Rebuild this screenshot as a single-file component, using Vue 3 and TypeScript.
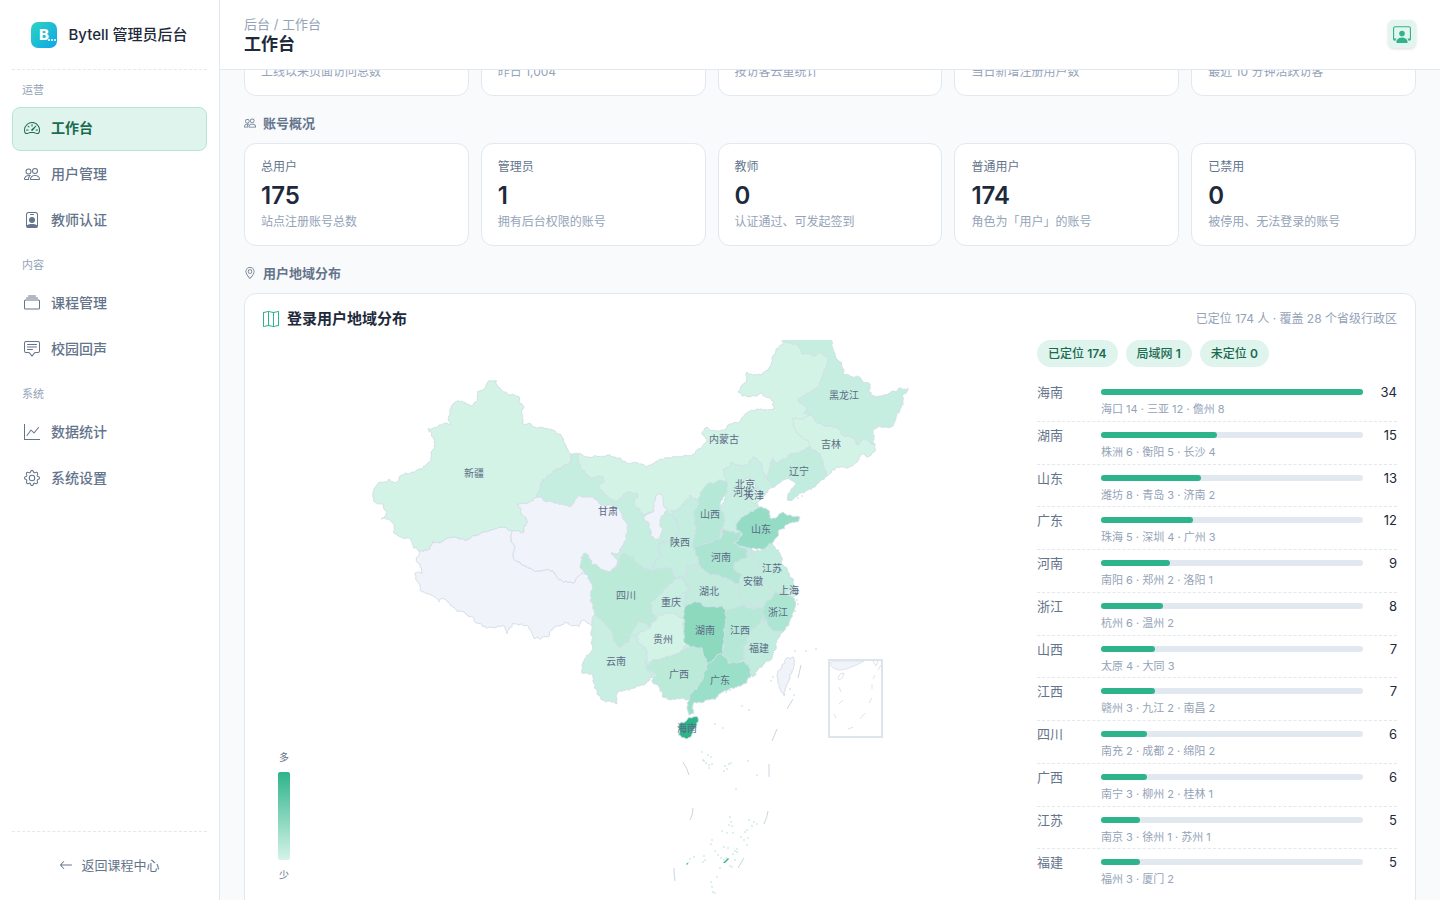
<script setup lang="ts">
interface NavItem { label: string; icon: string }
interface NavGroup { title: string; items: NavItem[] }
interface Stat { label: string; value: string; note: string }
interface Region { name: string; count: number; cities: string }
type Point = [number, number]
interface Province { fill: string; points: Point[] }

const icons: Record<string, string[]> = {
  speedometer: [
    'M8 4a.5.5 0 0 1 .5.5V6a.5.5 0 0 1-1 0V4.5A.5.5 0 0 1 8 4zM3.732 5.732a.5.5 0 0 1 .707 0l.915.914a.5.5 0 1 1-.708.708l-.914-.915a.5.5 0 0 1 0-.707zM2 10a.5.5 0 0 1 .5-.5h1.586a.5.5 0 0 1 0 1H2.5A.5.5 0 0 1 2 10zm9.5 0a.5.5 0 0 1 .5-.5h1.5a.5.5 0 0 1 0 1H12a.5.5 0 0 1-.5-.5zm.754-4.246a.389.389 0 0 0-.527-.02L7.547 9.31a.91.91 0 1 0 1.302 1.258l3.434-4.297a.389.389 0 0 0-.029-.518z',
    'M0 10a8 8 0 1 1 15.547 2.661c-.442 1.253-1.845 1.602-2.932 1.25C11.309 13.488 9.475 13 8 13c-1.474 0-3.31.488-4.615.911-1.087.352-2.49.003-2.932-1.25A7.988 7.988 0 0 1 0 10zm8-7a7 7 0 0 0-6.603 9.329c.203.575.923.876 1.68.63C4.397 12.533 6.358 12 8 12s3.604.532 4.923.96c.757.245 1.477-.056 1.68-.631A7 7 0 0 0 8 3z',
  ],
  people: [
    'M15 14s1 0 1-1-1-4-5-4-5 3-5 4 1 1 1 1h8Zm-7.978-1A.261.261 0 0 1 7 12.996c.001-.264.167-1.03.76-1.72C8.312 10.629 9.282 10 11 10c1.717 0 2.687.63 3.24 1.276.593.69.758 1.457.76 1.72l-.008.002a.274.274 0 0 1-.014.002H7.022ZM11 7a2 2 0 1 0 0-4 2 2 0 0 0 0 4Zm3-2a3 3 0 1 1-6 0 3 3 0 0 1 6 0ZM6.936 9.28a5.88 5.88 0 0 0-1.23-.247A7.35 7.35 0 0 0 5 9c-4 0-5 3-5 4 0 .667.333 1 1 1h4.216A2.238 2.238 0 0 1 5 13c0-1.01.377-2.042 1.09-2.904.243-.294.526-.569.846-.816ZM4.92 10A5.493 5.493 0 0 0 4 13H1c0-.26.164-1.03.76-1.724.545-.636 1.492-1.256 3.16-1.275ZM1.5 5.5a3 3 0 1 1 6 0 3 3 0 0 1-6 0Zm3-2a2 2 0 1 0 0 4 2 2 0 0 0 0-4Z',
  ],
  badge: [
    'M6.5 2a.5.5 0 0 0 0 1h3a.5.5 0 0 0 0-1h-3zM11 8a3 3 0 1 1-6 0 3 3 0 0 1 6 0z',
    'M4.5 0A2.5 2.5 0 0 0 2 2.5V14a2 2 0 0 0 2 2h8a2 2 0 0 0 2-2V2.5A2.5 2.5 0 0 0 11.5 0h-7zM3 2.5A1.5 1.5 0 0 1 4.5 1h7A1.5 1.5 0 0 1 13 2.5v10.795a4.2 4.2 0 0 0-.776-.492C11.392 12.387 10.063 12 8 12s-3.392.387-4.224.803a4.2 4.2 0 0 0-.776.492V2.5z',
  ],
  collection: [
    'M2.5 3.5a.5.5 0 0 1 0-1h11a.5.5 0 0 1 0 1h-11zm2-2a.5.5 0 0 1 0-1h7a.5.5 0 0 1 0 1h-7zM0 13a1.5 1.5 0 0 0 1.5 1.5h13A1.5 1.5 0 0 0 16 13V6a1.5 1.5 0 0 0-1.5-1.5h-13A1.5 1.5 0 0 0 0 6v7zm1.5.5A.5.5 0 0 1 1 13V6a.5.5 0 0 1 .5-.5h13a.5.5 0 0 1 .5.5v7a.5.5 0 0 1-.5.5h-13z',
  ],
  chat: [
    'M14 1a1 1 0 0 1 1 1v8a1 1 0 0 1-1 1h-2.5a2 2 0 0 0-1.6.8L8 14.333 6.1 11.8a2 2 0 0 0-1.6-.8H2a1 1 0 0 1-1-1V2a1 1 0 0 1 1-1h12zM2 0a2 2 0 0 0-2 2v8a2 2 0 0 0 2 2h2.5a1 1 0 0 1 .8.4l1.9 2.533a1 1 0 0 0 1.6 0l1.9-2.533a1 1 0 0 1 .8-.4H14a2 2 0 0 0 2-2V2a2 2 0 0 0-2-2H2z',
    'M3 3.5a.5.5 0 0 1 .5-.5h9a.5.5 0 0 1 0 1h-9a.5.5 0 0 1-.5-.5zM3 6a.5.5 0 0 1 .5-.5h9a.5.5 0 0 1 0 1h-9A.5.5 0 0 1 3 6zm0 2.5a.5.5 0 0 1 .5-.5h5a.5.5 0 0 1 0 1h-5a.5.5 0 0 1-.5-.5z',
  ],
  graph: [
    'M0 0h1v15h15v1H0V0Zm14.817 3.113a.5.5 0 0 1 .07.704l-4.5 5.5a.5.5 0 0 1-.74.037L7.06 6.767l-3.656 5.027a.5.5 0 0 1-.808-.588l4-5.5a.5.5 0 0 1 .758-.06l2.609 2.61 4.15-5.073a.5.5 0 0 1 .704-.07Z',
  ],
  gear: [
    'M8 4.754a3.246 3.246 0 1 0 0 6.492 3.246 3.246 0 0 0 0-6.492zM5.754 8a2.246 2.246 0 1 1 4.492 0 2.246 2.246 0 0 1-4.492 0z',
    'M9.796 1.343c-.527-1.79-3.065-1.79-3.592 0l-.094.319a.873.873 0 0 1-1.255.52l-.292-.16c-1.64-.892-3.433.902-2.54 2.541l.159.292a.873.873 0 0 1-.52 1.255l-.319.094c-1.79.527-1.79 3.065 0 3.592l.319.094a.873.873 0 0 1 .52 1.255l-.16.292c-.892 1.64.901 3.434 2.541 2.54l.292-.159a.873.873 0 0 1 1.255.52l.094.319c.527 1.79 3.065 1.79 3.592 0l.094-.319a.873.873 0 0 1 1.255-.52l.292.16c1.64.893 3.434-.902 2.54-2.541l-.159-.292a.873.873 0 0 1 .52-1.255l.319-.094c1.79-.527 1.79-3.065 0-3.592l-.319-.094a.873.873 0 0 1-.52-1.255l.16-.292c.893-1.64-.902-3.433-2.541-2.54l-.292.159a.873.873 0 0 1-1.255-.52l-.094-.319zm-2.633.283c.246-.835 1.428-.835 1.674 0l.094.319a1.873 1.873 0 0 0 2.693 1.115l.291-.16c.764-.415 1.6.42 1.184 1.185l-.159.292a1.873 1.873 0 0 0 1.116 2.692l.318.094c.835.246.835 1.428 0 1.674l-.319.094a1.873 1.873 0 0 0-1.115 2.693l.16.291c.415.764-.42 1.6-1.185 1.184l-.291-.159a1.873 1.873 0 0 0-2.693 1.116l-.094.318c-.246.835-1.428.835-1.674 0l-.094-.319a1.873 1.873 0 0 0-2.692-1.115l-.292.16c-.764.415-1.6-.42-1.184-1.185l.159-.291A1.873 1.873 0 0 0 1.945 8.93l-.319-.094c-.835-.246-.835-1.428 0-1.674l.319-.094A1.873 1.873 0 0 0 3.06 4.377l-.16-.292c-.415-.764.42-1.6 1.185-1.184l.292.159a1.873 1.873 0 0 0 2.692-1.115l.094-.319z',
  ],
  pin: [
    'M12.166 8.94c-.524 1.062-1.234 2.12-1.96 3.07A31.493 31.493 0 0 1 8 14.58a31.481 31.481 0 0 1-2.206-2.57c-.726-.95-1.436-2.008-1.96-3.07C3.304 7.867 3 6.862 3 6a5 5 0 0 1 10 0c0 .862-.305 1.867-.834 2.94zM8 16s6-5.686 6-10A6 6 0 0 0 2 6c0 4.314 6 10 6 10z',
    'M8 8a2 2 0 1 1 0-4 2 2 0 0 1 0 4zm0 1a3 3 0 1 0 0-6 3 3 0 0 0 0 6z',
  ],
  map: [
    'M15.817.113A.5.5 0 0 1 16 .5v14a.5.5 0 0 1-.402.49l-5 1a.502.502 0 0 1-.196 0L5.5 15.01l-4.902.98A.5.5 0 0 1 0 15.5v-14a.5.5 0 0 1 .402-.49l5-1a.5.5 0 0 1 .196 0L10.5.99l4.902-.98a.5.5 0 0 1 .415.103zM10 1.91l-4-.8v12.98l4 .8V1.91zm1 12.98 4-.8V1.11l-4 .8v12.98zm-6-.8V1.11l-4 .8v12.98l4-.8z',
  ],
  arrow: [
    'M15 8a.5.5 0 0 0-.5-.5H2.707l3.147-3.146a.5.5 0 1 0-.708-.708l-4 4a.5.5 0 0 0 0 .708l4 4a.5.5 0 0 0 .708-.708L2.707 8.5H14.5A.5.5 0 0 0 15 8z',
  ],
  workspace: [
    'M4 16s-1 0-1-1 1-4 5-4 5 3 5 4-1 1-1 1H4Zm4-5.95a2.5 2.5 0 1 0 0-5 2.5 2.5 0 0 0 0 5Z',
    'M2 1a2 2 0 0 0-2 2v9.5A1.5 1.5 0 0 0 1.5 14h.653a5.373 5.373 0 0 1 1.066-2H1V3a1 1 0 0 1 1-1h12a1 1 0 0 1 1 1v9h-2.219c.554.654.89 1.373 1.066 2h.653a1.5 1.5 0 0 0 1.5-1.5V3a2 2 0 0 0-2-2H2Z',
  ],
}

const groups: NavGroup[] = [
  { title: '运营', items: [
    { label: '工作台', icon: 'speedometer' },
    { label: '用户管理', icon: 'people' },
    { label: '教师认证', icon: 'badge' },
  ] },
  { title: '内容', items: [
    { label: '课程管理', icon: 'collection' },
    { label: '校园回声', icon: 'chat' },
  ] },
  { title: '系统', items: [
    { label: '数据统计', icon: 'graph' },
    { label: '系统设置', icon: 'gear' },
  ] },
]

const trafficNotes = ['上线以来页面访问总数', '昨日 1,004', '按访客去重统计', '当日新增注册用户数', '最近 10 分钟活跃访客']

const stats: Stat[] = [
  { label: '总用户', value: '175', note: '站点注册账号总数' },
  { label: '管理员', value: '1', note: '拥有后台权限的账号' },
  { label: '教师', value: '0', note: '认证通过、可发起签到' },
  { label: '普通用户', value: '174', note: '角色为「用户」的账号' },
  { label: '已禁用', value: '0', note: '被停用、无法登录的账号' },
]

const chips = [
  { label: '已定位', value: 174 },
  { label: '局域网', value: 1 },
  { label: '未定位', value: 0 },
]

const regions: Region[] = [
  { name: '海南', count: 34, cities: '海口 14 · 三亚 12 · 儋州 8' },
  { name: '湖南', count: 15, cities: '株洲 6 · 衡阳 5 · 长沙 4' },
  { name: '山东', count: 13, cities: '潍坊 8 · 青岛 3 · 济南 2' },
  { name: '广东', count: 12, cities: '珠海 5 · 深圳 4 · 广州 3' },
  { name: '河南', count: 9, cities: '南阳 6 · 郑州 2 · 洛阳 1' },
  { name: '浙江', count: 8, cities: '杭州 6 · 温州 2' },
  { name: '山西', count: 7, cities: '太原 4 · 大同 3' },
  { name: '江西', count: 7, cities: '赣州 3 · 九江 2 · 南昌 2' },
  { name: '四川', count: 6, cities: '南充 2 · 成都 2 · 绵阳 2' },
  { name: '广西', count: 6, cities: '南宁 3 · 柳州 2 · 桂林 1' },
  { name: '江苏', count: 5, cities: '南京 3 · 徐州 1 · 苏州 1' },
  { name: '福建', count: 5, cities: '福州 3 · 厦门 2' },
]
const maxCount = Math.max(...regions.map((r) => r.count))

// Areas in canvas units, larger ones first so that neighbours overlap them cleanly.
// The first two only back the seams between inland provinces.
const provinces: Province[] = [
  { fill: '#c9eee2', points: [[600,612],[660,596],[720,600],[750,640],[738,660],[700,662],[672,678],[648,679],[620,660]] },
  { fill: '#c5eee1', points: [[680,510],[738,516],[756,560],[776,596],[770,616],[690,606],[640,580]] },
  { fill: '#d3f3e6', points: [[573,456],[578,454],[594,456],[610,455],[620,458],[627,463],[646,467],[660,459],[676,457],[692,456],[700,449],[707,442],[702,434],[707,427],[722,430],[730,424],[738,423],[747,413],[757,409],[775,408],[770,398],[760,393],[750,397],[742,396],[738,392],[747,372],[758,375],[770,367],[772,359],[783,345],[781,330],[822,330],[832,352],[836,376],[832,410],[820,425],[830,450],[790,470],[760,480],[727,494],[700,505],[680,515],[655,530],[630,520],[610,500],[582,488]] },
  { fill: '#c5eee1', points: [[783,330],[828,330],[832,342],[838,360],[843,373],[857,376],[862,380],[869,383],[872,396],[885,395],[893,391],[908,388],[904,394],[903,400],[900,410],[891,427],[880,426],[873,430],[875,445],[862,440],[858,445],[850,437],[845,437],[837,428],[820,423],[810,415],[803,413],[807,407],[798,401],[807,393],[817,388],[822,377],[828,357],[822,352],[813,356],[802,354],[799,345],[790,343],[784,340]] },
  { fill: '#d3f3e6', points: [[792,418],[803,419],[810,415],[820,423],[837,428],[845,437],[850,437],[858,445],[862,440],[875,445],[874,452],[868,457],[862,454],[857,462],[847,468],[837,467],[827,476],[823,462],[817,452],[810,447],[807,440],[797,433]] },
  { fill: '#c1ecde', points: [[807,448],[810,447],[817,452],[823,462],[827,476],[815,487],[800,493],[794,498],[787,500],[793,488],[795,482],[787,478],[780,483],[773,487],[767,477],[770,468],[773,458],[777,463],[790,454]] },
  { fill: '#f0f3f9', points: [[419,551],[427,550],[432,541],[443,541],[450,537],[467,540],[483,532],[500,527],[512,531],[514,545],[513,555],[522,565],[533,570],[555,573],[563,582],[575,582],[582,573],[588,575],[595,587],[595,610],[594,625],[587,623],[583,620],[579,627],[565,622],[547,637],[534,638],[529,627],[513,623],[509,628],[507,634],[504,626],[492,628],[482,626],[465,613],[460,611],[443,598],[439,602],[435,597],[420,590],[416,577],[415,573],[422,573],[417,562]] },
  { fill: '#c5eee1', points: [[567,465],[571,454],[578,454],[583,470],[590,478],[603,476],[604,482],[598,487],[617,501],[623,495],[637,493],[638,497],[634,503],[643,514],[653,512],[667,510],[676,520],[678,528],[678,537],[668,541],[659,543],[659,558],[653,565],[655,572],[640,570],[625,560],[615,572],[600,560],[590,530],[590,510],[540,500],[537,497],[542,480],[557,469]] },
  { fill: '#f0f3f9', points: [[655,497],[661,494],[663,505],[667,510],[660,520],[662,533],[656,540],[650,535],[649,523],[643,517],[653,512]] },
  { fill: '#d3f3e6', points: [[486,387],[488,382],[496,380],[497,385],[507,393],[518,396],[524,408],[522,423],[533,427],[548,429],[562,437],[565,445],[571,454],[567,465],[557,469],[542,480],[537,497],[518,504],[522,511],[526,518],[524,532],[512,531],[500,527],[483,532],[467,540],[450,537],[443,541],[432,541],[427,550],[419,551],[413,547],[411,539],[403,538],[394,533],[393,523],[387,519],[381,519],[386,516],[383,504],[375,502],[373,493],[377,485],[389,479],[391,482],[397,482],[402,475],[409,474],[417,470],[430,462],[431,454],[435,448],[432,433],[428,429],[443,424],[450,425],[448,420],[455,402],[472,406],[477,402],[477,392]] },
  { fill: '#f0f3f9', points: [[518,504],[537,497],[541,497],[544,501],[553,502],[570,507],[577,497],[592,497],[603,505],[622,513],[628,532],[620,552],[611,553],[617,563],[610,572],[603,570],[593,568],[588,562],[582,573],[575,582],[563,582],[555,573],[533,570],[522,565],[513,555],[514,545],[512,531],[524,532],[526,518]] },
  { fill: '#c9eee2', points: [[592,623],[597,610],[608,620],[625,630],[633,635],[645,640],[645,648],[645,663],[652,677],[649,681],[641,685],[633,688],[618,692],[617,704],[610,701],[603,700],[597,693],[593,673],[582,673],[583,662],[592,650],[591,635]] },
  { fill: '#bbead8', points: [[581,557],[584,553],[588,555],[593,565],[603,570],[610,572],[618,565],[625,553],[640,565],[655,570],[670,568],[677,578],[670,590],[660,597],[655,615],[652,627],[638,620],[633,630],[628,643],[618,647],[613,636],[608,627],[597,617],[594,610],[593,587],[588,575],[580,567]] },
  { fill: '#c5eee1', points: [[698,500],[690,495],[680,507],[677,512],[670,510],[678,528],[678,537],[659,543],[659,558],[653,565],[655,570],[670,568],[677,578],[687,580],[700,567],[704,550],[700,530]] },
  { fill: '#c9eee2', points: [[725,493],[726,480],[723,470],[732,462],[747,465],[753,457],[760,462],[762,468],[767,477],[773,487],[768,492],[763,497],[757,503],[760,509],[747,515],[740,532],[722,533],[718,510]] },
  { fill: '#b6e8d7', points: [[700,492],[710,483],[725,481],[728,492],[720,507],[725,520],[722,528],[720,540],[710,545],[694,550],[693,540],[697,527],[693,513],[698,500]] },
  { fill: '#d3f3e6', points: [[738,484],[747,477],[755,481],[755,488],[748,493],[740,492]] },
  { fill: '#d3f3e6', points: [[752,492],[758,487],[761,497],[756,503],[751,500]] },
  { fill: '#c3ecdf', points: [[687,575],[687,565],[700,565],[715,570],[742,578],[742,595],[745,606],[728,613],[722,610],[705,610],[685,609],[690,587],[677,578]] },
  { fill: '#c9eee2', points: [[677,578],[690,587],[686,593],[675,598],[685,608],[683,622],[670,615],[660,620],[652,613],[650,603],[663,592],[669,584]] },
  { fill: '#d3f3e6', points: [[637,635],[650,628],[658,615],[670,613],[684,620],[688,643],[683,650],[670,657],[653,660],[645,663],[645,648],[637,642]] },
  { fill: '#c1ecde', points: [[744,548],[763,549],[772,543],[780,553],[785,567],[792,578],[794,587],[786,594],[773,595],[763,590],[755,570]] },
  { fill: '#c3ecdf', points: [[744,549],[750,552],[757,560],[762,573],[768,585],[775,592],[772,600],[763,607],[753,607],[743,605],[740,595],[738,580],[731,568],[735,560]] },
  { fill: '#abe4d1', points: [[694,548],[710,542],[722,537],[722,528],[735,533],[742,532],[735,543],[747,550],[747,557],[735,562],[733,568],[742,575],[740,582],[735,584],[723,578],[708,573],[700,567],[695,553]] },
  { fill: '#94dcc4', points: [[737,523],[745,515],[753,512],[760,507],[768,510],[770,518],[777,517],[783,512],[790,515],[800,517],[798,522],[790,523],[778,532],[772,543],[763,549],[747,548],[733,543],[742,533],[736,529]] },
  { fill: '#cff1e5', points: [[785,592],[793,586],[799,591],[797,595],[790,597]] },
  { fill: '#b6e8d7', points: [[724,613],[732,608],[742,605],[762,607],[767,620],[758,635],[748,655],[740,663],[728,663],[721,657],[721,633]] },
  { fill: '#ade5d3', points: [[768,600],[775,592],[783,592],[792,597],[795,601],[795,608],[792,617],[788,626],[783,632],[773,632],[767,623],[763,610]] },
  { fill: '#c1ecde', points: [[763,617],[767,623],[773,632],[783,632],[777,642],[775,650],[772,658],[762,667],[753,677],[747,670],[742,662],[743,647],[750,633]] },
  { fill: '#bbead8', points: [[683,650],[692,647],[702,648],[709,660],[709,670],[703,683],[692,695],[687,700],[680,699],[670,700],[662,696],[660,688],[652,680],[657,675],[645,667],[653,660],[670,657]] },
  { fill: '#8cd9be', points: [[685,607],[690,604],[698,602],[708,607],[722,605],[725,613],[723,630],[724,653],[715,658],[707,663],[702,648],[692,647],[685,643],[684,627]] },
  { fill: '#9adfc7', points: [[707,663],[715,658],[721,653],[725,657],[728,663],[737,663],[743,661],[749,667],[751,677],[747,683],[739,686],[730,688],[718,697],[705,700],[695,702],[692,708],[694,713],[689,715],[687,708],[689,698],[700,683],[707,670]] },
  { fill: '#2db48a', points: [[682,722],[688,718],[698,717],[697,725],[692,734],[687,739],[678,735],[678,727]] },
  { fill: '#f0f3f9', points: [[787,658],[793,657],[794,663],[792,672],[788,683],[785,689],[784,696],[779,685],[777,676],[782,665]] },
]

// Deterministic midpoint displacement: an edge shared by two areas gets the same wiggle in both.
function subdivide(a: Point, b: Point, depth: number, out: Point[]): void {
  const dx = b[0] - a[0]
  const dy = b[1] - a[1]
  const len = Math.hypot(dx, dy)
  if (depth === 0 || len < 2) {
    out.push(b)
    return
  }
  const key = Math.sin((a[0] + b[0]) * 12.9898 + (a[1] + b[1]) * 78.233) * 43758.5453
  const noise = key - Math.floor(key) - 0.5
  const sign = dx > 0 || (dx === 0 && dy > 0) ? 1 : -1
  const k = noise * (len > 8 ? 0.26 : 0.5) * sign
  const mid: Point = [(a[0] + b[0]) / 2 - dy * k, (a[1] + b[1]) / 2 + dx * k]
  subdivide(a, mid, depth - 1, out)
  subdivide(mid, b, depth - 1, out)
}

function outline(points: Point[]): string {
  const out: Point[] = [points[0]]
  points.forEach((p, i) => subdivide(p, points[(i + 1) % points.length], 4, out))
  return 'M' + out.map((p) => `${p[0].toFixed(1)} ${p[1].toFixed(1)}`).join('L') + 'Z'
}

const shapes = provinces.map((p) => ({ fill: p.fill, d: outline(p.points) }))

const mapLabels: { name: string; x: number; y: number }[] = [
  { name: '新疆', x: 474, y: 473 }, { name: '甘肃', x: 608, y: 511 }, { name: '内蒙古', x: 724, y: 439 },
  { name: '黑龙江', x: 844, y: 395 }, { name: '吉林', x: 831, y: 444 }, { name: '辽宁', x: 799, y: 471 },
  { name: '河北', x: 743, y: 492 }, { name: '北京', x: 745, y: 484 }, { name: '天津', x: 754, y: 495 },
  { name: '山西', x: 710, y: 514 }, { name: '山东', x: 761, y: 529 }, { name: '陕西', x: 680, y: 542 },
  { name: '河南', x: 721, y: 557 }, { name: '江苏', x: 772, y: 568 }, { name: '安徽', x: 753, y: 581 },
  { name: '湖北', x: 709, y: 591 }, { name: '上海', x: 789, y: 590 }, { name: '重庆', x: 671, y: 602 },
  { name: '浙江', x: 778, y: 612 }, { name: '四川', x: 626, y: 595 }, { name: '湖南', x: 705, y: 630 },
  { name: '江西', x: 740, y: 630 }, { name: '贵州', x: 663, y: 639 }, { name: '福建', x: 759, y: 648 },
  { name: '云南', x: 616, y: 661 }, { name: '广西', x: 679, y: 674 }, { name: '广东', x: 720, y: 680 },
  { name: '海南', x: 687, y: 728 },
]

const seaLines = 'M801 665 798 678M793 699 787 709M777 729 772 741M769 764V777M768 811Q767 818 764 824M744 858 738 868M674 868Q674 875 675 881M693 808Q693 815 690 820M683 762Q687 768 689 775'

const islets: Point[] = [
  [742,706],[749,710],[715,724],[723,728],[702,752],[708,755],[711,757],[704,761],[706,763],[709,765],[703,760],[712,764],[709,768],
  [729,764],[731,763],[725,766],[727,769],[724,771],[748,761],[757,775],[736,789],[730,817],[731,822],[729,825],[732,826],[749,820],
  [754,822],[757,824],[752,826],[722,831],[727,833],[733,833],[747,830],[745,832],[741,837],[744,840],[712,840],[711,844],[724,847],
  [728,848],[737,849],[747,845],[748,838],[715,851],[718,855],[704,856],[705,860],[703,862],[694,857],[690,859],[733,854],[737,852],
  [735,851],[721,858],[726,858],[730,866],[732,867],[724,860],[720,868],[717,877],[711,882],[712,887],[713,892],[715,893],[735,860],
  [795,651],[806,651],[816,649],[790,689],[794,695],[773,677],[771,681],[795,604],[797,600],[795,611],[798,604],[802,496],[798,498],[726,692],[730,690],[724,690],
]
</script>

<template>
  <div class="app">
    <aside class="sidebar">
      <div class="brand">
        <svg class="logo" viewBox="0 0 26 26" aria-hidden="true">
          <defs>
            <linearGradient id="logoFill" x1="0" y1="0" x2="1" y2="1">
              <stop offset="0" stop-color="#2dd4bf" />
              <stop offset="1" stop-color="#0ea5e9" />
            </linearGradient>
          </defs>
          <rect width="26" height="26" rx="7" fill="url(#logoFill)" />
          <text x="8" y="18" class="logo-letter">B</text>
          <g fill="#fff">
            <circle cx="18" cy="18" r="1" />
            <circle cx="21" cy="18" r="1" />
            <circle cx="24" cy="18" r="1" />
          </g>
        </svg>
        <span>Bytell 管理员后台</span>
      </div>
      <nav class="nav">
        <template v-for="(group, gi) in groups" :key="group.title">
          <div class="nav-title">{{ group.title }}</div>
          <a
            v-for="(item, ii) in group.items"
            :key="item.label"
            href="#"
            class="nav-item"
            :class="{ active: gi === 0 && ii === 0 }"
          >
            <svg class="icon-16" viewBox="0 0 16 16" aria-hidden="true"><path v-for="d in icons[item.icon]" :key="d" :d="d" /></svg>
            {{ item.label }}
          </a>
        </template>
      </nav>
      <div class="sidebar-foot">
        <a href="#" class="back">
          <svg class="icon-14" viewBox="0 0 16 16" aria-hidden="true"><path :d="icons.arrow[0]" /></svg>
          返回课程中心
        </a>
      </div>
    </aside>

    <div class="main">
      <header class="topbar">
        <div>
          <div class="crumb">后台 / 工作台</div>
          <h1>工作台</h1>
        </div>
        <button type="button" class="avatar" aria-label="账号">
          <svg class="icon-18" viewBox="0 0 16 16" aria-hidden="true"><path v-for="d in icons.workspace" :key="d" :d="d" /></svg>
        </button>
      </header>

      <main class="content">
        <div class="cards cards-peek">
          <div v-for="note in trafficNotes" :key="note" class="card">
            <div class="card-note">{{ note }}</div>
          </div>
        </div>

        <h2 class="section-title">
          <svg class="icon-12" viewBox="0 0 16 16" aria-hidden="true"><path :d="icons.people[0]" /></svg>
          账号概况
        </h2>
        <div class="cards">
          <div v-for="s in stats" :key="s.label" class="card">
            <div class="card-label">{{ s.label }}</div>
            <div class="card-value">{{ s.value }}</div>
            <div class="card-note">{{ s.note }}</div>
          </div>
        </div>

        <h2 class="section-title">
          <svg class="icon-12" viewBox="0 0 16 16" aria-hidden="true"><path v-for="d in icons.pin" :key="d" :d="d" /></svg>
          用户地域分布
        </h2>
        <section class="panel">
          <div class="panel-head">
            <h3>
              <svg class="icon-16" viewBox="0 0 16 16" aria-hidden="true"><path :d="icons.map[0]" /></svg>
              登录用户地域分布
            </h3>
            <span class="panel-meta">已定位 174 人 · 覆盖 28 个省级行政区</span>
          </div>
          <div class="panel-body">
            <div class="map">
              <svg class="map-canvas" viewBox="263 340 754 560" role="img" aria-label="登录用户地域分布">
                <g class="land">
                  <path v-for="(s, i) in shapes" :key="i" :d="s.d" :fill="s.fill" />
                </g>
                <path class="sea" :d="seaLines" />
                <g fill="#b5dcd6">
                  <circle v-for="(p, i) in islets" :key="i" :cx="p[0]" :cy="p[1]" r="0.8" />
                </g>
                <path d="M723 863l5-5 1 1-4 4z M686 864l3-2-2 3z" fill="#2db48a" />
                <g class="inset">
                  <path d="M829 664l4-3h31q-16 9-25 9-5 0-10-6z" fill="#f0f3f9" />
                  <path d="M873 661l3 5 2-5M838 678l2-4 4-1-2 5-3 2zM839 687l2 5M839 704l4-4M834 714l2 4M848 729l5-2M860 719l5-6M869 703l3-5M872 684v5M873 679l2-4M878 670l3-5" fill="none" />
                  <rect x="829" y="660" width="53" height="77" fill="none" />
                </g>
                <text v-for="l in mapLabels" :key="l.name" class="map-label" :x="l.x" :y="l.y">{{ l.name }}</text>
              </svg>
              <div class="legend">
                <span>多</span>
                <div class="legend-bar"></div>
                <span>少</span>
              </div>
            </div>

            <div class="side">
              <div class="chips">
                <span v-for="c in chips" :key="c.label" class="chip">{{ c.label }} <b>{{ c.value }}</b></span>
              </div>
              <ul class="ranks">
                <li v-for="r in regions" :key="r.name" class="rank">
                  <span class="rank-name">{{ r.name }}</span>
                  <div class="track"><div class="fill" :style="{ width: (r.count / maxCount) * 100 + '%' }"></div></div>
                  <span class="rank-count">{{ r.count }}</span>
                  <span class="rank-cities">{{ r.cities }}</span>
                </li>
              </ul>
            </div>
          </div>
        </section>
      </main>
    </div>
  </div>
</template>

<style>
body {
  margin: 0;
  overflow: hidden;
}
</style>

<style scoped>
* {
  box-sizing: border-box;
}
.app {
  display: flex;
  height: 100vh;
  overflow: hidden;
  background: #f8fafc;
  color: #1e293b;
  font-family: Inter, "Noto Sans CJK SC", sans-serif;
  font-size: 13px;
  line-height: 18px;
}
svg {
  flex: none;
  fill: currentColor;
}
.icon-12 { width: 12px; height: 12px; }
.icon-14 { width: 14px; height: 14px; }
.icon-16 { width: 16px; height: 16px; }
.icon-18 { width: 18px; height: 18px; }
a {
  color: inherit;
  text-decoration: none;
}
h1, h2, h3, ul {
  margin: 0;
  padding: 0;
}

.sidebar {
  display: flex;
  flex-direction: column;
  flex: none;
  width: 220px;
  padding: 0 12px;
  background: #fff;
  border-right: 1px solid #e2e8f0;
}
.brand {
  display: flex;
  align-items: center;
  justify-content: center;
  gap: 11px;
  height: 70px;
  border-bottom: 1px dashed #e2e8f0;
  font-size: 15px;
  font-weight: 500;
  white-space: nowrap;
}
.logo {
  width: 26px;
  height: 26px;
}
.logo-letter {
  fill: #fff;
  font-size: 15px;
  font-weight: 800;
}
.nav {
  display: flex;
  flex: 1;
  flex-direction: column;
  gap: 2px;
}
.nav-title {
  padding: 12px 10px 7px;
  color: #94a3b8;
  font-size: 11px;
  line-height: 16px;
}
.nav-item {
  display: flex;
  align-items: center;
  gap: 11px;
  height: 44px;
  padding: 0 11px 2px;
  border: 1px solid transparent;
  border-radius: 8px;
  color: #64748b;
  font-size: 14px;
  font-weight: 500;
}
.nav-item.active {
  background: #dff4ec;
  border-color: #b5e6d5;
  color: #1a6b50;
  font-weight: 600;
}
.sidebar-foot {
  display: flex;
  align-items: center;
  justify-content: center;
  height: 69px;
  padding-bottom: 2px;
  border-top: 1px dashed #e2e8f0;
}
.back {
  display: flex;
  align-items: center;
  gap: 8px;
  color: #64748b;
}

.main {
  display: flex;
  flex: 1;
  flex-direction: column;
  min-width: 0;
}
.topbar {
  display: flex;
  flex: none;
  align-items: center;
  justify-content: space-between;
  height: 70px;
  padding: 0 24px 2px;
  background: #fff;
  border-bottom: 1px solid #e2e8f0;
}
.crumb {
  color: #94a3b8;
  line-height: 20px;
}
h1 {
  font-size: 17px;
  font-weight: 600;
  line-height: 20px;
}
.avatar {
  display: grid;
  place-items: center;
  width: 28px;
  height: 28px;
  padding: 0;
  border: 0;
  border-radius: 6px;
  background: #e4f5ef;
  box-shadow: 0 1px 3px rgb(15 23 42 / 15%);
  color: #2db48a;
}
.content {
  flex: 1;
  min-height: 0;
  padding: 0 24px;
  overflow: hidden;
}
.cards {
  display: grid;
  grid-template-columns: repeat(5, minmax(0, 1fr));
  gap: 12px;
}
.cards-peek {
  align-items: end;
  align-content: end;
  height: 26px;
  overflow: hidden;
}
.card {
  display: flex;
  flex-direction: column;
  justify-content: flex-end;
  min-height: 103px;
  padding: 14px 16px 15px;
  background: #fff;
  border: 1px solid #e2e8f0;
  border-radius: 12px;
}
.card-label {
  margin-bottom: 2px;
  color: #64748b;
  font-size: 12px;
  line-height: 18px;
}
.card-value {
  font-size: 24px;
  font-weight: 600;
  line-height: 36px;
}
.card-note {
  color: #94a3b8;
  font-size: 12px;
  line-height: 16px;
}
.section-title {
  display: flex;
  align-items: center;
  gap: 7px;
  margin: 17px 0 10px;
  color: #64748b;
  font-size: 13px;
  font-weight: 600;
  line-height: 20px;
}

.panel {
  padding: 14px 18px;
  background: #fff;
  border: 1px solid #e2e8f0;
  border-radius: 12px;
}
.panel-head {
  display: flex;
  align-items: center;
  justify-content: space-between;
  margin-bottom: 10px;
}
h3 {
  display: flex;
  align-items: center;
  gap: 8px;
  font-size: 15px;
  font-weight: 600;
  line-height: 22px;
}
h3 svg {
  color: #2db48a;
}
.panel-meta {
  color: #94a3b8;
  font-size: 12px;
}
.panel-body {
  display: grid;
  grid-template-columns: minmax(0, 1fr) 360px;
  gap: 20px;
}
.map {
  position: relative;
  height: 560px;
}
.map-canvas {
  display: block;
  width: 100%;
  height: 100%;
}
.land path {
  stroke: #d3dfe8;
  stroke-width: 1;
  stroke-linejoin: round;
}
.sea {
  fill: none;
  stroke: #cbd5e1;
  stroke-width: 1;
}
.inset {
  stroke: #dde4ed;
  stroke-width: 2;
}
.inset path {
  stroke-width: 1;
}
.map-label {
  fill: #5b6b85;
  font-size: 10px;
  text-anchor: middle;
  dominant-baseline: central;
}
.legend {
  position: absolute;
  left: 15px;
  bottom: 18px;
  display: flex;
  flex-direction: column;
  align-items: center;
  gap: 8px;
  color: #64748b;
  font-size: 10px;
  line-height: 14px;
}
.legend-bar {
  width: 12px;
  height: 88px;
  border-radius: 2px;
  background: linear-gradient(#2db48a, #d5f4e8);
}
.side {
  display: flex;
  flex-direction: column;
  padding-bottom: 8px;
}
.chips {
  display: flex;
  gap: 8px;
  margin-bottom: 12px;
}
.chip {
  padding: 0 11px;
  border-radius: 14px;
  background: #dff4ec;
  color: #1a6b50;
  font-size: 12px;
  font-weight: 500;
  line-height: 27px;
}
.chip b {
  font-weight: 600;
}
.ranks {
  display: flex;
  flex: 1;
  flex-direction: column;
  list-style: none;
}
.rank {
  display: grid;
  flex: 1;
  grid-template-columns: 52px minmax(0, 1fr) 22px;
  grid-template-rows: 18px 16px;
  column-gap: 12px;
  align-items: center;
  padding-top: 4px;
  border-bottom: 1px dashed #e2e8f0;
}
.rank:last-child {
  border-bottom-color: transparent;
}
.rank-name {
  color: #64748b;
}
.track {
  height: 6px;
  border-radius: 3px;
  background: #e2e8f0;
}
.fill {
  height: 100%;
  border-radius: 3px;
  background: #2db48a;
}
.rank-count {
  text-align: right;
}
.rank-cities {
  grid-column: 2;
  color: #94a3b8;
  font-size: 11px;
  line-height: 16px;
  white-space: nowrap;
}
</style>
